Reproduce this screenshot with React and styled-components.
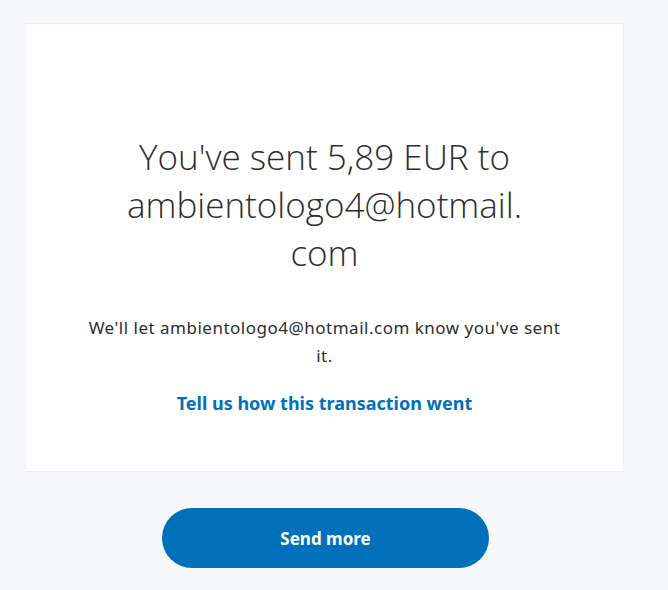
import React from 'react'
import styled, { createGlobalStyle } from 'styled-components'

const GlobalStyle = createGlobalStyle`
  body {
    margin: 0;
    background: #f5f7fa;
    font-family: "Noto Sans", "Liberation Sans", sans-serif;
    color: #2c2e2f;
  }
`

const Page = styled.div`
  width: 599px;
  margin: 23px 0 0 25px;
  display: flex;
  flex-direction: column;
  align-items: center;
`

const Card = styled.section`
  box-sizing: border-box;
  width: 100%;
  height: 449px;
  background: #fff;
  border: 1px solid #eceef2;
  padding: 109px 0 0;
  display: flex;
  flex-direction: column;
  align-items: center;
  text-align: center;
`

const Heading = styled.h1`
  margin: 0;
  width: 430px;
  font-family: "Open Sans", sans-serif;
  font-weight: 300;
  font-size: 35px;
  line-height: 48px;
  color: #2c2e2f;
`

const Message = styled.p`
  margin: 37px 0 0;
  width: 490px;
  font-size: 17px;
  line-height: 28px;
  letter-spacing: 0.5px;
  color: #2c2e2f;
`

const FeedbackLink = styled.a`
  margin-top: 21px;
  font-size: 18px;
  line-height: 24px;
  font-weight: 700;
  color: #0070ba;
  text-decoration: none;
  cursor: pointer;
`

const PrimaryButton = styled.button`
  margin: 36px 0 0 2px;
  width: 327px;
  height: 60px;
  border: none;
  border-radius: 30px;
  background: #0070ba;
  color: #fff;
  font-family: "Noto Sans", "Liberation Sans", sans-serif;
  font-size: 17px;
  font-weight: 700;
  cursor: pointer;
`

const App = () => {
  return (
    <>
      <GlobalStyle />
      <Page>
        <Card>
          <Heading>
            You've sent 5,89 EUR to ambientologo4@hotmail.<wbr />com
          </Heading>
          <Message>
            We'll let ambientologo4@hotmail.com know you've sent it.
          </Message>
          <FeedbackLink>Tell us how this transaction went</FeedbackLink>
        </Card>
        <PrimaryButton>Send more</PrimaryButton>
      </Page>
    </>
  )
}

export default App
